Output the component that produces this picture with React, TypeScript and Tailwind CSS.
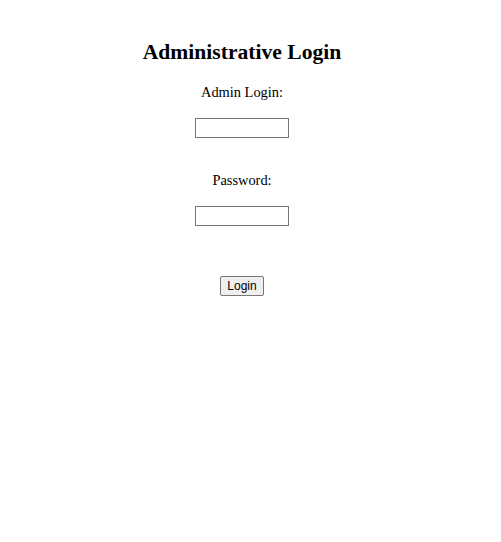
import React from "react";

const serif = "font-['Liberation_Serif','Times_New_Roman',serif]";

const App = () => (
  <div className={`w-[484px] bg-white text-black ${serif}`}>
    <form
      className="flex flex-col items-center pt-[40px]"
      onSubmit={(e) => e.preventDefault()}
    >
      <h2 className="h-[24px] text-[21.6px] font-bold leading-[24px]">
        Administrative Login
      </h2>
      <label htmlFor="login" className="mt-[20px] text-[14.4px] leading-[16px]">
        Admin Login:
      </label>
      <input
        id="login"
        type="text"
        className="mt-[18px] h-[20px] w-[94px] border border-[#767676] bg-white px-[2px] text-[12px] outline-none"
      />
      <label htmlFor="pass" className="mt-[34px] text-[14.4px] leading-[16px]">
        Password:
      </label>
      <input
        id="pass"
        type="password"
        className="mt-[18px] h-[20px] w-[94px] border border-[#767676] bg-white px-[2px] text-[12px] outline-none"
      />
      <button
        type="submit"
        className="mt-[50px] h-[20px] w-[44px] rounded-[2px] border border-[#767676] bg-[#efefef] font-['Liberation_Sans',Arial,sans-serif] text-[12px] leading-none text-black"
      >
        Login
      </button>
    </form>
  </div>
);

export default App;
